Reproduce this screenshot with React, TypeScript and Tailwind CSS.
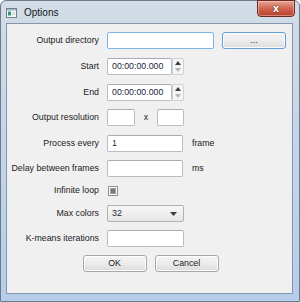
import React from "react";

function Input({ w, text, focused }: { w: string; text?: string; focused?: boolean }) {
  return (
    <div
      className={`${w} h-[17px] bg-white rounded-[2px] border flex items-center pl-[4px] text-[#1e1e3c] ${
        focused ? "border-[#7fb2e6]" : "border-[#b9bcc2] border-t-[#a9acb2]"
      }`}
    >
      {text}
    </div>
  );
}

function Spin() {
  return (
    <div className="flex items-center">
      <Input w="w-[65px]" text="00:00:00.000" />
      <div className="w-[12px] h-[17px] border border-[#cfd1d4] rounded-[2px] bg-[#f5f5f5] flex flex-col items-center justify-center gap-[3px]">
        <svg width="6" height="4" viewBox="0 0 6 4">
          <path d="M3 0 L6 4 L0 4 Z" fill="#3c3c3c" />
        </svg>
        <svg width="6" height="4" viewBox="0 0 6 4">
          <path d="M0 0 L6 0 L3 4 Z" fill="#b4b4b4" />
        </svg>
      </div>
    </div>
  );
}

function Row({ label, children, mt }: { label: string; children: React.ReactNode; mt: string }) {
  return (
    <div className={`flex items-center h-[17px] ${mt}`}>
      <div className="w-[92px] text-right whitespace-nowrap">{label}</div>
      <div className="ml-[8px] flex items-center">{children}</div>
    </div>
  );
}

function Button({ children, def }: { children: React.ReactNode; def?: boolean }) {
  return (
    <div
      className={`w-[64px] h-[17px] rounded-[3px] border flex items-center justify-center bg-gradient-to-b from-[#f4f4f4] via-[#ececec] to-[#dcdcdc] shadow-[inset_0_0_0_1px_#fcfcfc] ${
        def ? "border-[#5fa0db]" : "border-[#a8a8a8]"
      }`}
    >
      {children}
    </div>
  );
}

export default function App() {
  return (
    <div className="w-[300px] h-[302px] bg-white overflow-hidden font-['Liberation_Sans',Arial,sans-serif] text-[8.8px] text-[#1b1b1b]">
      <div className="w-[300px] h-[302px] flex flex-col rounded-t-[6px] border border-[#6c7b8c] bg-gradient-to-b from-[#d3dce6] via-[#c3d5ea] to-[#b6cde9]">
        {/* title bar */}
        <div className="h-[22px] flex items-start shrink-0">
          <svg className="ml-[5px] mt-[7px]" width="11" height="10" viewBox="0 0 11 10">
            <rect x="0.5" y="0.5" width="10" height="9" fill="#f4f6f8" stroke="#6f7f8f" />
            <rect x="1" y="1" width="9" height="1.5" fill="#9fb3c8" />
            <rect x="2" y="3.5" width="3" height="4" fill="#2f9c6e" />
            <rect x="6" y="4" width="3" height="3" fill="#d6dde4" />
          </svg>
          <div className="ml-[7px] mt-[6px] text-[10px] leading-[12px] text-[#101820]">Options</div>
          <div className="ml-auto mr-[4px] w-[38px] h-[17px] -mt-[1px] rounded-b-[4px] border border-[#6b2a22] bg-gradient-to-b from-[#e6a896] via-[#d0634f] to-[#b8402d] shadow-[inset_0_0_0_1px_rgba(255,220,210,0.45)] flex items-center justify-center">
            <span className="text-white font-['DejaVu_Sans',sans-serif] font-bold text-[10px] leading-[10px] [text-shadow:0_0_1px_#5a1a10,0_0_1px_#5a1a10]">x</span>
          </div>
        </div>
        {/* client */}
        <div className="ml-[5px] mr-[6px] mb-[7px] flex-1 border border-[#8396ab] bg-[#f0f0f0] flex flex-col pt-[8px]">
          <div className="flex items-center h-[17px]">
            <div className="w-[92px] text-right whitespace-nowrap">Output directory</div>
            <div className="ml-[8px]">
              <Input w="w-[107px]" focused />
            </div>
            <div className="ml-[8px]">
              <Button def>...</Button>
            </div>
          </div>
          <Row label="Start" mt="mt-[9px]">
            <Spin />
          </Row>
          <Row label="End" mt="mt-[9px]">
            <Spin />
          </Row>
          <Row label="Output resolution" mt="mt-[8px]">
            <Input w="w-[28px]" />
            <span className="w-[22px] text-center">x</span>
            <Input w="w-[27px]" />
          </Row>
          <Row label="Process every" mt="mt-[9px]">
            <Input w="w-[76px]" text="1" />
            <span className="ml-[9px]">frame</span>
          </Row>
          <Row label="Delay between frames" mt="mt-[8px]">
            <Input w="w-[76px]" />
            <span className="ml-[9px]">ms</span>
          </Row>
          <Row label="Infinite loop" mt="mt-[5px]">
            <div className="ml-[1px] w-[10px] h-[10px] border border-[#8e8f8f] bg-white flex items-center justify-center">
              <div className="w-[6px] h-[6px] bg-[#7a7a7a] border border-[#a0a0a0]" />
            </div>
          </Row>
          <Row label="Max colors" mt="mt-[6px]">
            <div className="w-[77px] h-[17px] rounded-[2px] border border-[#b0b0b0] bg-gradient-to-b from-[#f7f7f7] to-[#e6e6e6] flex items-center pl-[4px] text-[#1e1e3c]">
              <span>32</span>
              <svg className="ml-auto mr-[6px]" width="7" height="4" viewBox="0 0 7 4">
                <path d="M0 0 L7 0 L3.5 4 Z" fill="#3c3c3c" />
              </svg>
            </div>
          </Row>
          <Row label="K-means iterations" mt="mt-[8px]">
            <Input w="w-[77px]" />
          </Row>
          <div className="flex justify-center gap-[8px] mt-[8px] pl-[2px]">
            <Button>OK</Button>
            <Button>Cancel</Button>
          </div>
        </div>
      </div>
    </div>
  );
}
